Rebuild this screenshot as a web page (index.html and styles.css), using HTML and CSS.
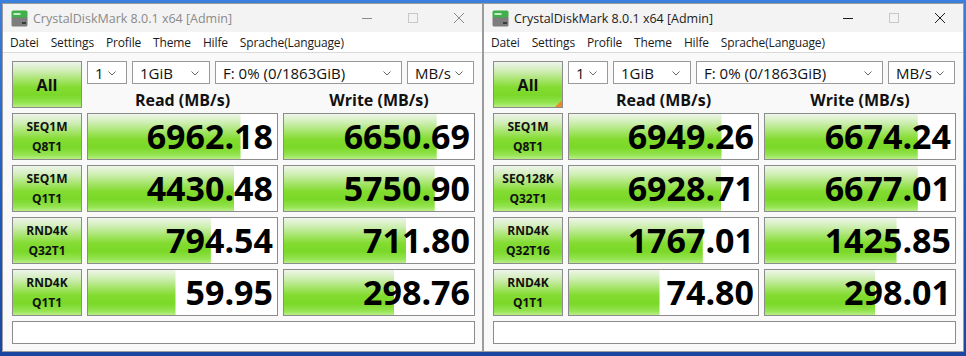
FILE: index.html
```html
<!DOCTYPE html>
<html>
<head>
    <title>CrystalDiskMark</title>
    <link rel="stylesheet" href="styles.css">
</head>
<body>
    <div class="desktop">
        <!-- left window (inactive) -->
        <div class="window inactive">
            <div class="titlebar">
                <svg class="app-icon" width="17" height="17" viewBox="0 0 17 17">
                    <rect x="0.5" y="6" width="16" height="10.5" rx="1.5" fill="#7d7d7d"/>
                    <rect x="0.5" y="0.5" width="16" height="7" rx="1.5" fill="#3fb04b"/>
                    <rect x="2.5" y="3" width="7" height="2" fill="#c6ecc6"/>
                    <rect x="11" y="12" width="4" height="2" fill="#3a3a3a"/>
                </svg>
                <span class="title">CrystalDiskMark 8.0.1 x64 [Admin]</span>
                <div class="caption">
                    <span class="cap"><svg width="10" height="10"><line x1="0" y1="5.5" x2="10" y2="5.5" stroke="currentColor"/></svg></span>
                    <span class="cap disabled"><svg width="10" height="10"><rect x="0.5" y="0.5" width="9" height="9" fill="none" stroke="currentColor"/></svg></span>
                    <span class="cap"><svg width="10" height="10"><path d="M0 0L10 10M10 0L0 10" stroke="currentColor"/></svg></span>
                </div>
            </div>
            <div class="menubar">
                <span>Datei</span><span>Settings</span><span>Profile</span><span>Theme</span><span>Hilfe</span><span>Sprache(Language)</span>
            </div>
            <div class="client">
                <div class="board">
                    <div class="all">All</div>
                    <div class="selects">
                        <div class="combo c-count">1<svg class="chev" width="8" height="5"><path d="M0.5 0.5L4 4L7.5 0.5" fill="none" stroke="#666"/></svg></div>
                        <div class="combo c-size">1GiB<svg class="chev" width="8" height="5"><path d="M0.5 0.5L4 4L7.5 0.5" fill="none" stroke="#666"/></svg></div>
                        <div class="combo c-drive">F: 0% (0/1863GiB)<svg class="chev" width="8" height="5"><path d="M0.5 0.5L4 4L7.5 0.5" fill="none" stroke="#666"/></svg></div>
                        <div class="combo c-unit">MB/s<svg class="chev" width="8" height="5"><path d="M0.5 0.5L4 4L7.5 0.5" fill="none" stroke="#666"/></svg></div>
                    </div>
                    <div class="col-head">Read (MB/s)</div>
                    <div class="col-head">Write (MB/s)</div>

                    <div class="test">SEQ1M<br>Q8T1</div>
                    <div class="meter" style="background-size: 80.71% 100%">6962.18</div>
                    <div class="meter" style="background-size: 80.38% 100%">6650.69</div>

                    <div class="test">SEQ1M<br>Q1T1</div>
                    <div class="meter" style="background-size: 77.44% 100%">4430.48</div>
                    <div class="meter" style="background-size: 79.33% 100%">5750.90</div>

                    <div class="test">RND4K<br>Q32T1</div>
                    <div class="meter" style="background-size: 65.00% 100%">794.54</div>
                    <div class="meter" style="background-size: 64.21% 100%">711.80</div>

                    <div class="test">RND4K<br>Q1T1</div>
                    <div class="meter" style="background-size: 46.30% 100%">59.95</div>
                    <div class="meter" style="background-size: 57.92% 100%">298.76</div>
                </div>
                <div class="comment"></div>
            </div>
        </div>

        <!-- right window (active) -->
        <div class="window active">
            <div class="titlebar">
                <svg class="app-icon" width="17" height="17" viewBox="0 0 17 17">
                    <rect x="0.5" y="6" width="16" height="10.5" rx="1.5" fill="#7d7d7d"/>
                    <rect x="0.5" y="0.5" width="16" height="7" rx="1.5" fill="#3fb04b"/>
                    <rect x="2.5" y="3" width="7" height="2" fill="#c6ecc6"/>
                    <rect x="11" y="12" width="4" height="2" fill="#3a3a3a"/>
                </svg>
                <span class="title">CrystalDiskMark 8.0.1 x64 [Admin]</span>
                <div class="caption">
                    <span class="cap"><svg width="10" height="10"><line x1="0" y1="5.5" x2="10" y2="5.5" stroke="currentColor"/></svg></span>
                    <span class="cap disabled"><svg width="10" height="10"><rect x="0.5" y="0.5" width="9" height="9" fill="none" stroke="currentColor"/></svg></span>
                    <span class="cap"><svg width="10" height="10"><path d="M0 0L10 10M10 0L0 10" stroke="currentColor"/></svg></span>
                </div>
            </div>
            <div class="menubar">
                <span>Datei</span><span>Settings</span><span>Profile</span><span>Theme</span><span>Hilfe</span><span>Sprache(Language)</span>
            </div>
            <div class="client">
                <div class="board">
                    <div class="all marked">All</div>
                    <div class="selects">
                        <div class="combo c-count">1<svg class="chev" width="8" height="5"><path d="M0.5 0.5L4 4L7.5 0.5" fill="none" stroke="#666"/></svg></div>
                        <div class="combo c-size">1GiB<svg class="chev" width="8" height="5"><path d="M0.5 0.5L4 4L7.5 0.5" fill="none" stroke="#666"/></svg></div>
                        <div class="combo c-drive">F: 0% (0/1863GiB)<svg class="chev" width="8" height="5"><path d="M0.5 0.5L4 4L7.5 0.5" fill="none" stroke="#666"/></svg></div>
                        <div class="combo c-unit">MB/s<svg class="chev" width="8" height="5"><path d="M0.5 0.5L4 4L7.5 0.5" fill="none" stroke="#666"/></svg></div>
                    </div>
                    <div class="col-head">Read (MB/s)</div>
                    <div class="col-head">Write (MB/s)</div>

                    <div class="test">SEQ1M<br>Q8T1</div>
                    <div class="meter" style="background-size: 80.70% 100%">6949.26</div>
                    <div class="meter" style="background-size: 80.41% 100%">6674.24</div>

                    <div class="test">SEQ128K<br>Q32T1</div>
                    <div class="meter" style="background-size: 80.68% 100%">6928.71</div>
                    <div class="meter" style="background-size: 80.41% 100%">6677.01</div>

                    <div class="test">RND4K<br>Q32T16</div>
                    <div class="meter" style="background-size: 70.79% 100%">1767.01</div>
                    <div class="meter" style="background-size: 69.23% 100%">1425.85</div>

                    <div class="test">RND4K<br>Q1T1</div>
                    <div class="meter" style="background-size: 47.90% 100%">74.80</div>
                    <div class="meter" style="background-size: 57.90% 100%">298.01</div>
                </div>
                <div class="comment"></div>
            </div>
        </div>
    </div>
</body>
</html>
```

FILE: styles.css
```css
* {
    box-sizing: border-box;
}

body {
    margin: 0;
    width: 966px;
    height: 356px;
    overflow: hidden;
    font-family: "Open Sans", sans-serif;
    color: #111;
    background: linear-gradient(180deg, #3a80dc 0%, #1d5cc2 55%, #1a46a0 100%);
}

.desktop {
    display: flex;
    padding: 3px 0 0 2px;
}

.window {
    width: 481px;
    height: 349px;
    display: flex;
    flex-direction: column;
    background: #f9f9f9;
    border: 1px solid #9c9c9c;
}

/* title bar */
.titlebar {
    height: 28px;
    display: flex;
    align-items: center;
    padding-left: 8px;
    background: #f3f3f3;
}

.app-icon {
    flex: none;
}

.title {
    margin-left: 5px;
    font-size: 12.5px;
    color: #8a8a8a;
}

.active .title {
    color: #1b1b1b;
}

.caption {
    margin-left: auto;
    display: flex;
    height: 100%;
}

.cap {
    width: 46px;
    display: flex;
    align-items: center;
    justify-content: center;
    color: #8a8a8a;
}

.active .cap {
    color: #1b1b1b;
}

.cap.disabled,
.active .cap.disabled {
    color: #c8c8c8;
}

/* menu */
.menubar {
    height: 21px;
    display: flex;
    align-items: center;
    gap: 12px;
    padding-left: 7px;
    font-size: 12px;
    letter-spacing: -0.15px;
    color: #1b1b1b;
    background: #fff;
    border-bottom: 1px solid #dadada;
}

/* main area */
.client {
    flex: 1;
    padding: 8px 0 0 9px;
}

.board {
    display: grid;
    grid-template-columns: 70px 191px 192px;
    grid-template-rows: 23px 19px repeat(4, 47px);
    gap: 5px;
}

.all,
.test {
    border: 1px solid #8c8c8c;
    background: linear-gradient(180deg, #eef4ea 0%, #d3eebd 18%, #a6e46a 40%, #84dc33 56%, #7bd829 74%, #93e34f 90%, #b9ee88 100%);
    font-weight: bold;
    color: #111;
    display: flex;
    flex-direction: column;
    align-items: center;
    justify-content: center;
}

.all {
    grid-row: span 2;
    font-size: 16px;
    position: relative;
}

.all.marked::after {
    content: "";
    position: absolute;
    right: 0;
    bottom: 0;
    border-style: solid;
    border-width: 0 0 7px 7px;
    border-color: transparent transparent #f0882a transparent;
}

.test {
    font-size: 12px;
    line-height: 20px;
    text-align: center;
}

.selects {
    grid-column: 2 / 4;
    display: flex;
    gap: 5px;
}

.combo {
    height: 23px;
    display: flex;
    align-items: center;
    padding: 1px 10px 0 7px;
    font-size: 15px;
    background: #fff;
    border: 1px solid #999;
    white-space: nowrap;
}

.chev {
    margin-left: auto;
}

.c-count { width: 40px; }
.c-size { width: 78px; }
.c-drive { width: 187px; }
.c-unit { width: 67px; }

.col-head {
    display: flex;
    align-items: flex-end;
    justify-content: center;
    font-size: 16px;
    font-weight: bold;
    line-height: 1;
}

.meter {
    border: 1px solid #8c8c8c;
    background-color: #fff;
    background-image: linear-gradient(180deg, #eef6e8 0%, #d0efb6 18%, #a3e466 40%, #83dc30 56%, #7ad827 74%, #92e34d 90%, #b8ee86 100%);
    background-repeat: no-repeat;
    text-align: right;
    padding-right: 4px;
    font-size: 34px;
    font-weight: bold;
    line-height: 45px;
    color: #000;
}

.comment {
    margin-top: 5px;
    width: 463px;
    height: 23px;
    background: #fff;
    border: 1px solid #8c8c8c;
}
```
